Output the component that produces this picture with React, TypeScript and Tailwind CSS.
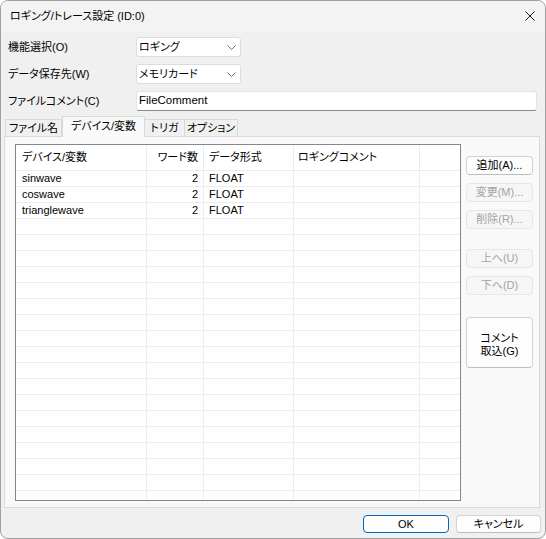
import clsx from 'clsx';

type Row = { name: string; words: string; type: string; comment: string };

const rows: Row[] = [
  { name: 'sinwave', words: '2', type: 'FLOAT', comment: '' },
  { name: 'coswave', words: '2', type: 'FLOAT', comment: '' },
  { name: 'trianglewave', words: '2', type: 'FLOAT', comment: '' },
];

// 空行で一覧を埋める
const allRows: Row[] = [
  ...rows,
  ...Array.from({ length: 18 }, () => ({ name: '', words: '', type: '', comment: '' })),
];

function Chevron() {
  return (
    <svg width="9" height="5" viewBox="0 0 9 5" fill="none">
      <path d="M0.5 0.5L4.5 4.5L8.5 0.5" stroke="#6b6b6b" strokeWidth="1" />
    </svg>
  );
}

function Combo({ value }: { value: string }) {
  return (
    <div className="w-[105px] h-[20px] bg-white border border-[#dcdcdc] rounded-[3px] flex items-center justify-between pl-[2px] pr-[4px]">
      <span>{value}</span>
      <Chevron />
    </div>
  );
}

function SideButton({
  children,
  disabled,
  className,
}: {
  children: React.ReactNode;
  disabled?: boolean;
  className?: string;
}) {
  return (
    <button
      className={clsx(
        'w-[67px] rounded-[4px] border flex items-center justify-center text-center leading-[13px] whitespace-nowrap',
        disabled
          ? 'bg-[#f6f6f6] border-[#e6e6e6] text-[#a3a3a3]'
          : 'bg-[#fdfdfd] border-[#d3d3d3] border-b-[#bdbdbd] text-black',
        className
      )}
    >
      {children}
    </button>
  );
}

function App() {
  return (
    <div className="w-[546px] h-[539px] border border-[#a0a0a0] rounded-[8px] overflow-hidden bg-[#f0f0f0] flex flex-col text-[11px] text-black font-['Liberation_Sans','Noto_Sans_CJK_JP',sans-serif] [font-feature-settings:'palt']">
      {/* タイトルバー */}
      <div className="h-[30px] shrink-0 bg-[#f3f3f3] flex items-center justify-between pl-[9px] pr-[10px]">
        <span>ロギング/トレース設定 (ID:0)</span>
        <svg width="10" height="10" viewBox="0 0 10 10" fill="none">
          <path d="M0.5 0.5L9.5 9.5M9.5 0.5L0.5 9.5" stroke="#1a1a1a" strokeWidth="1" />
        </svg>
      </div>

      {/* 設定項目 */}
      <div className="pt-[6px] pl-[7px] flex flex-col gap-[7px]">
        <div className="flex items-center h-[20px]">
          <span className="w-[128px]">機能選択(O)</span>
          <Combo value="ロギング" />
        </div>
        <div className="flex items-center h-[20px]">
          <span className="w-[128px]">データ保存先(W)</span>
          <Combo value="メモリカード" />
        </div>
        <div className="flex items-center h-[20px]">
          <span className="w-[128px]">ファイルコメント(C)</span>
          <div className="w-[401px] h-[20px] bg-white border border-[#e3e3e3] border-b-[#8a8a8a] rounded-[3px] flex items-center pl-[2px] text-[11.5px]">
            FileComment
          </div>
        </div>
      </div>

      {/* タブ */}
      <div className="mt-[5px] h-[20px] flex items-end pl-[4px] relative z-10 whitespace-nowrap">
        <div className="w-[57px] h-[17px] bg-[#f0f0f0] border border-b-0 border-[#d9d9d9] flex items-center justify-center">
          ファイル名
        </div>
        <div className="w-[83px] h-[21px] -mb-[1px] bg-[#f9f9f9] border border-b-0 border-[#d9d9d9] flex items-center justify-center pb-[1px]">
          デバイス/変数
        </div>
        <div className="w-[40px] h-[17px] bg-[#f0f0f0] border border-l-0 border-b-0 border-[#d9d9d9] flex items-center justify-center">
          トリガ
        </div>
        <div className="w-[53px] h-[17px] bg-[#f0f0f0] border border-l-0 border-b-0 border-[#d9d9d9] flex items-center justify-center">
          オプション
        </div>
      </div>

      {/* タブパネル */}
      <div className="ml-[3px] w-[536px] h-[372px] shrink-0 bg-[#f9f9f9] border border-[#d9d9d9] flex pt-[7px] pl-[10px]">
        <div className="w-[446px] h-[357px] bg-white border border-[#828790] overflow-hidden flex flex-col">
          <div className="h-[26px] shrink-0 flex border-b border-[#ececec]">
            <div className="w-[131px] border-r border-[#ececec] pl-[6px] flex items-center">デバイス/変数</div>
            <div className="w-[57px] border-r border-[#ececec] pr-[5px] flex items-center justify-end">ワード数</div>
            <div className="w-[90px] border-r border-[#ececec] pl-[5px] flex items-center">データ形式</div>
            <div className="w-[126px] border-r border-[#ececec] pl-[4px] flex items-center">ロギングコメント</div>
            <div className="flex-1" />
          </div>
          {allRows.map((r, i) => (
            <div key={i} className="h-[16px] shrink-0 flex border-b border-[#ededed] text-[11px] leading-[15px]">
              <div className="w-[131px] border-r border-[#ededed] pl-[6px]">{r.name}</div>
              <div className="w-[57px] border-r border-[#ededed] pr-[5px] text-right">{r.words}</div>
              <div className="w-[90px] border-r border-[#ededed] pl-[5px]">{r.type}</div>
              <div className="w-[126px] border-r border-[#ededed] pl-[4px]">{r.comment}</div>
              <div className="flex-1" />
            </div>
          ))}
        </div>

        {/* 操作ボタン */}
        <div className="ml-[5px] mt-[12px] flex flex-col">
          <SideButton className="h-[19px]">追加(A)...</SideButton>
          <SideButton className="h-[19px] mt-[8px]" disabled>
            変更(M)...
          </SideButton>
          <SideButton className="h-[19px] mt-[8px]" disabled>
            削除(R)...
          </SideButton>
          <SideButton className="h-[19px] mt-[20px]" disabled>
            上へ(U)
          </SideButton>
          <SideButton className="h-[19px] mt-[8px]" disabled>
            下へ(D)
          </SideButton>
          <SideButton className="h-[51px] mt-[22px] pt-[4px]">
            コメント
            <br />
            取込(G)
          </SideButton>
        </div>
      </div>

      {/* OK / キャンセル */}
      <div className="flex-1 flex justify-end items-start pt-[7px] pr-[4px] gap-[7px]">
        <button className="w-[86px] h-[18px] rounded-[4px] border border-[#0067c0] bg-[#fdfdfd] flex items-center justify-center">
          OK
        </button>
        <button className="w-[85px] h-[18px] rounded-[4px] border border-[#d3d3d3] border-b-[#bdbdbd] bg-[#fdfdfd] flex items-center justify-center">
          キャンセル
        </button>
      </div>
    </div>
  );
}

export default App;
